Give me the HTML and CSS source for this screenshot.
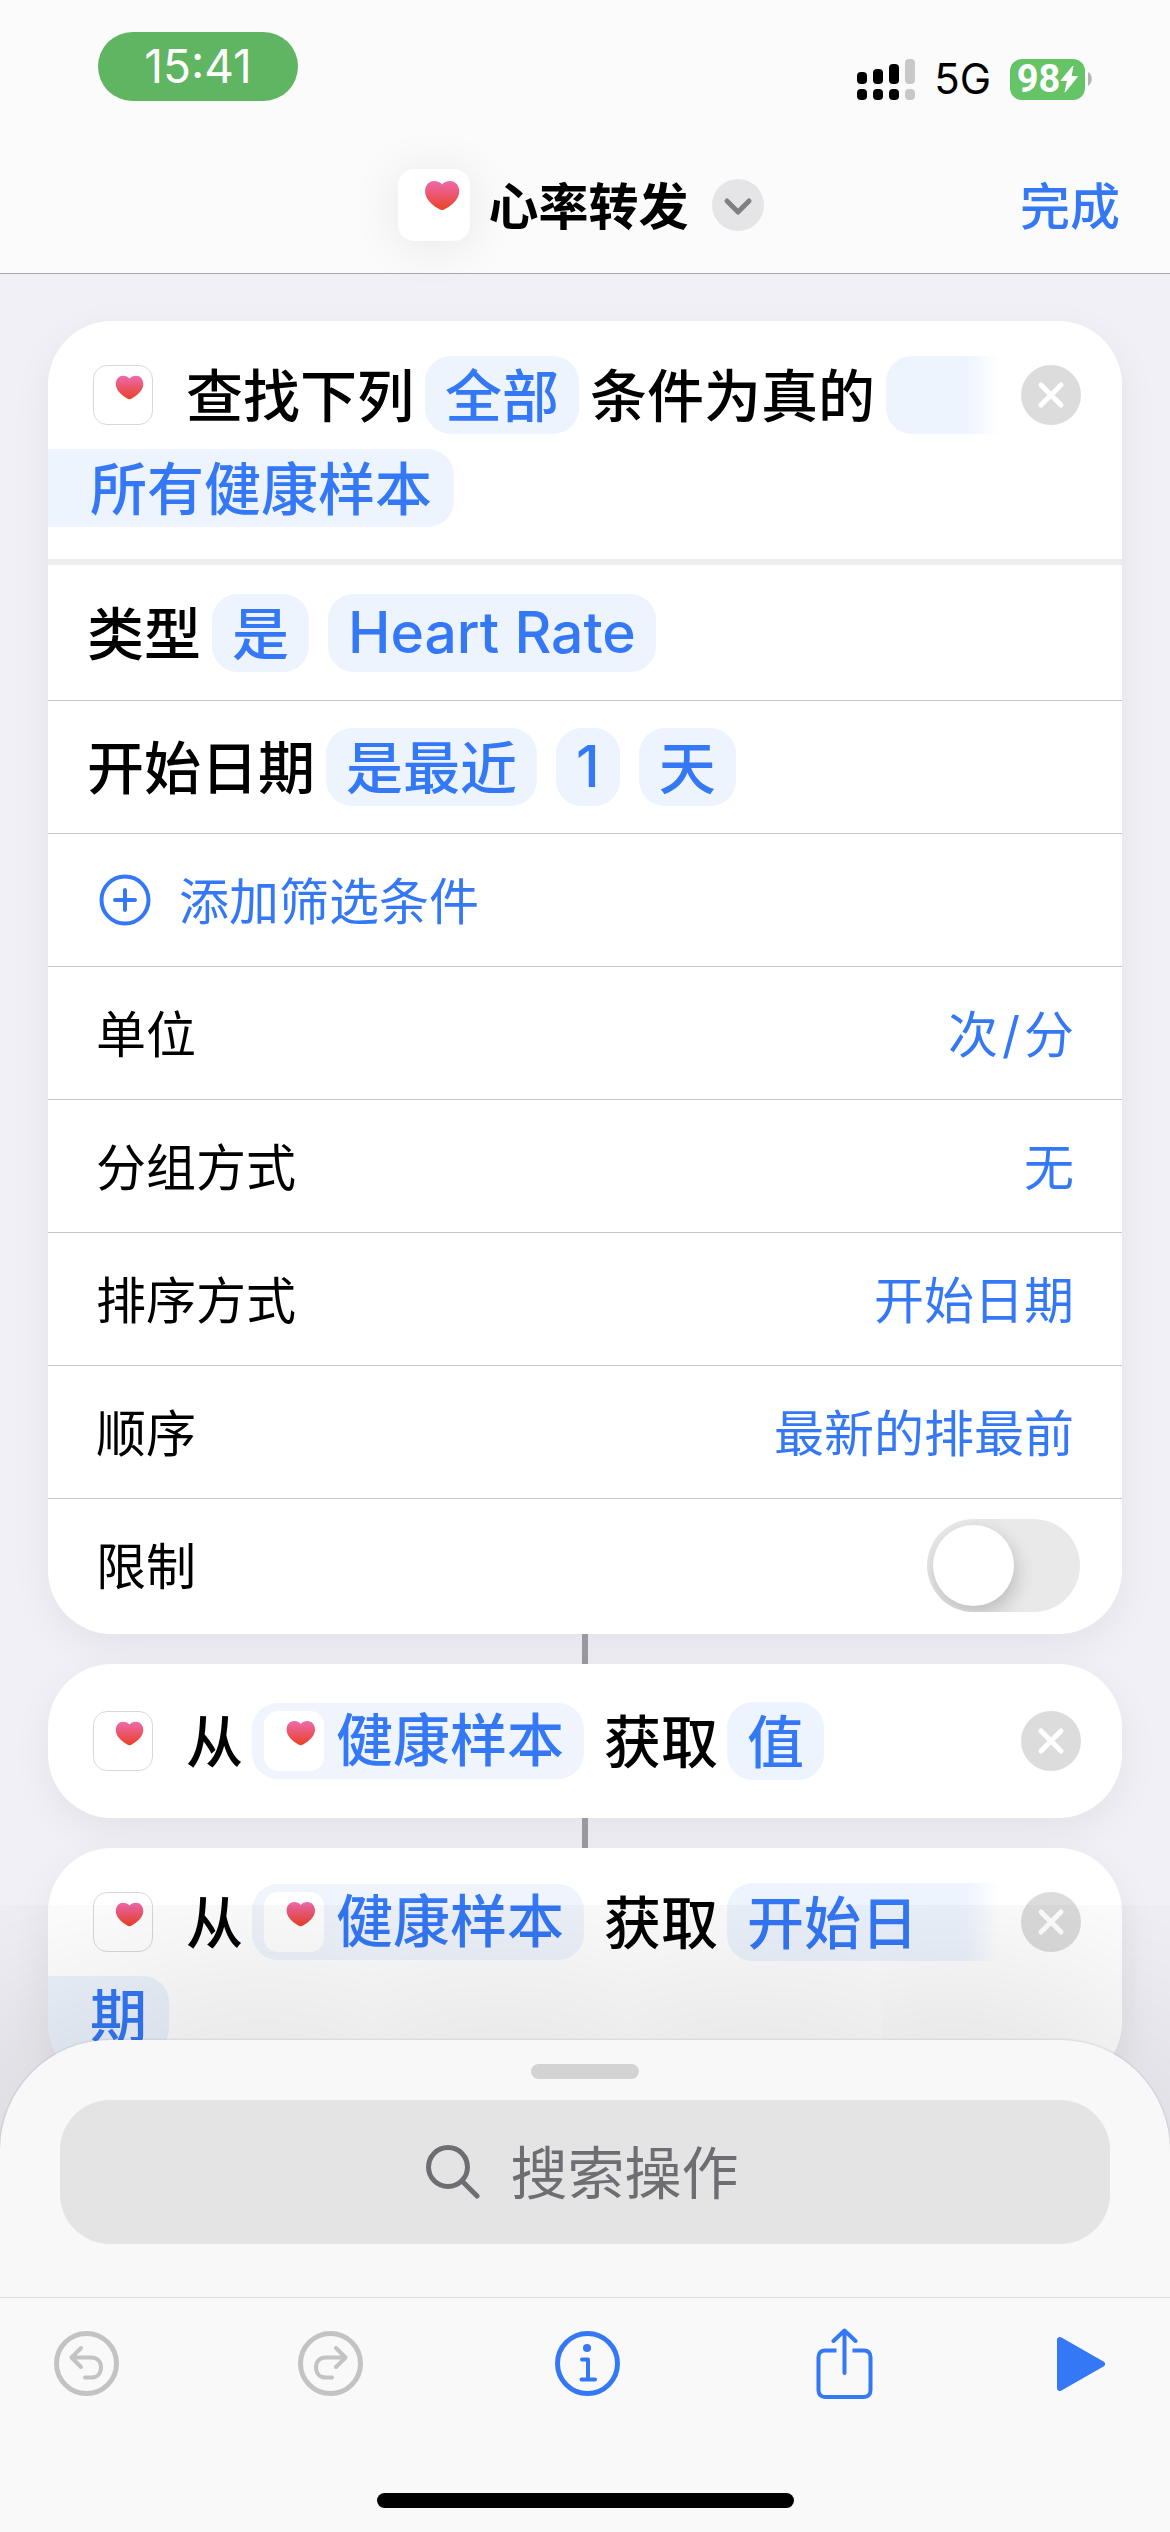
FILE: index.html
```html
<!DOCTYPE html>
<html lang="zh-CN">
<head>
<meta charset="utf-8">
<meta name="viewport" content="width=device-width, initial-scale=1">
<title>心率转发</title>
<link rel="stylesheet" href="styles.css">
</head>
<body>
<svg class="defs" aria-hidden="true">
  <defs>
    <linearGradient id="heart-fill" x1="0" y1="0" x2="0" y2="1">
      <stop offset="0" stop-color="#ec6aae"/>
      <stop offset="1" stop-color="#eb4025"/>
    </linearGradient>
    <symbol id="heart" viewBox="0 0 60 60">
      <path fill="url(#heart-fill)" d="M36.800 34.300C35.500 34.300 22.600 28 22.600 18.500C22.600 13.500 26 10 30 10C33 10 35.500 11 36.800 13C38 11 40.500 10 43.500 10C47.600 10 51 13.500 51 18.500C51 28 38 34.300 36.800 34.300Z"/>
    </symbol>
    <symbol id="cross" viewBox="0 0 60 60">
      <circle cx="30" cy="30" r="30" fill="currentColor"/>
      <path d="M20 20L40 40M40 20L20 40" stroke="#fff" stroke-width="5" stroke-linecap="round"/>
    </symbol>
  </defs>
</svg>

<header class="top">
  <div class="status">
    <span class="clock">15:41</span>
    <div class="signals">
      <svg class="bars" viewBox="0 0 58 41" aria-hidden="true">
        <rect x="0" y="13" width="10" height="12" rx="4"/><rect x="16" y="10" width="10" height="15" rx="4"/><rect x="32" y="5" width="10" height="20" rx="4"/>
        <rect x="0" y="30" width="10" height="11" rx="4"/><rect x="16" y="30" width="10" height="11" rx="4"/><rect x="32" y="30" width="10" height="11" rx="4"/>
        <g fill="#c8c8c8"><rect x="48" y="0" width="10" height="25" rx="4"/><rect x="48" y="30" width="10" height="11" rx="4"/></g>
      </svg>
      <span class="network">5G</span>
      <span class="battery">98<svg class="bolt" viewBox="0 0 18 28" aria-hidden="true"><path d="M13 1L1 15.500H7.500L5 27L17.500 11.500H11Z" fill="#fff" stroke="#fff" stroke-linejoin="round"/></svg></span>
      <svg class="nub" viewBox="0 0 4 14" aria-hidden="true"><path d="M0 0C5 3 5 11 0 14Z" fill="#b4b4b4"/></svg>
    </div>
  </div>
  <div class="nav">
    <button class="title" type="button">
      <svg class="title-icon" viewBox="0 0 60 60" aria-hidden="true"><use href="#heart" width="60" height="60"/></svg>
      <span class="title-text">心率转发</span>
      <svg class="chevron" viewBox="0 0 52 52" aria-hidden="true"><circle cx="26" cy="26" r="26" fill="#e5e5e7"/><path d="M15 22L26 33L37 22" fill="none" stroke="#808084" stroke-width="5" stroke-linecap="round" stroke-linejoin="round"/></svg>
    </button>
    <button class="done" type="button">完成</button>
  </div>
</header>

<main class="flow">
  <section class="card">
    <div class="action">
      <svg class="app-icon" viewBox="0 0 60 60" aria-hidden="true"><use href="#heart" width="60" height="60"/></svg>
      <div class="phrase spaced">
        <span class="word">查找下列</span><button class="chip" type="button">全部</button><span class="word">条件为真的</span><span class="chip open"></span>
      </div>
      <button class="remove" type="button" aria-label="移除"><svg viewBox="0 0 60 60"><use href="#cross"/></svg></button>
    </div>
    <div class="wrapped"><button class="chip tail" type="button">所有健康样本</button></div>
    <div class="filter first">
      <span class="filter-name">类型</span><button class="chip" type="button">是</button><button class="chip latin" type="button">Heart Rate</button>
    </div>
    <div class="filter">
      <span class="filter-name">开始日期</span><button class="chip" type="button">是最近</button><button class="chip latin" type="button">1</button><button class="chip" type="button">天</button>
    </div>
    <button class="row add" type="button">
      <svg class="plus" viewBox="0 0 52 52" aria-hidden="true"><g fill="none" stroke="currentColor" stroke-width="4" stroke-linecap="round"><circle cx="26" cy="26" r="23.500"/><path d="M26 16V36M16 26H36"/></g></svg>
      <span class="name">添加筛选条件</span>
    </button>
    <div class="row"><span class="name">单位</span><button class="value" type="button">次<span class="slash">/</span>分</button></div>
    <div class="row"><span class="name">分组方式</span><button class="value" type="button">无</button></div>
    <div class="row"><span class="name">排序方式</span><button class="value" type="button">开始日期</button></div>
    <div class="row"><span class="name">顺序</span><button class="value" type="button">最新的排最前</button></div>
    <div class="row"><label class="name" for="limit">限制</label><input class="switch" id="limit" type="checkbox" role="switch"></div>
  </section>

  <div class="link"></div>

  <section class="card">
    <div class="action single">
      <svg class="app-icon" viewBox="0 0 60 60" aria-hidden="true"><use href="#heart" width="60" height="60"/></svg>
      <div class="phrase">
        <span class="word">从</span><button class="chip variable" type="button"><svg class="chip-icon" viewBox="0 0 60 60" aria-hidden="true"><use href="#heart" width="60" height="60"/></svg>健康样本</button><span class="word verb">获取</span><button class="chip" type="button">值</button>
      </div>
      <button class="remove" type="button" aria-label="移除"><svg viewBox="0 0 60 60"><use href="#cross"/></svg></button>
    </div>
  </section>

  <div class="link"></div>

  <section class="card">
    <div class="action">
      <svg class="app-icon" viewBox="0 0 60 60" aria-hidden="true"><use href="#heart" width="60" height="60"/></svg>
      <div class="phrase">
        <span class="word">从</span><button class="chip variable" type="button"><svg class="chip-icon" viewBox="0 0 60 60" aria-hidden="true"><use href="#heart" width="60" height="60"/></svg>健康样本</button><span class="word verb">获取</span><button class="chip open" type="button">开始日</button>
      </div>
      <button class="remove" type="button" aria-label="移除"><svg viewBox="0 0 60 60"><use href="#cross"/></svg></button>
    </div>
    <div class="wrapped"><button class="chip tail" type="button">期</button></div>
  </section>
</main>

<footer class="sheet">
  <div class="drawer">
    <div class="grabber"></div>
    <button class="search" type="button">
      <svg class="lens" viewBox="0 0 54 54" aria-hidden="true"><g fill="none" stroke="currentColor" stroke-width="5" stroke-linecap="round"><circle cx="22" cy="22" r="19.500"/><path d="M36.500 36.500L51 51"/></g></svg>
      <span class="word">搜索操作</span>
    </button>
  </div>
  <nav class="toolbar">
    <button class="tool" type="button" aria-label="撤销" disabled>
      <svg class="round" viewBox="0 0 65 65"><g fill="none" stroke="currentColor" stroke-width="4" stroke-linecap="round" stroke-linejoin="round"><circle cx="32.500" cy="32.500" r="30" stroke-width="5"/><path d="M27 17L17.500 26.500L27 36M18.500 26.500H37C43 26.500 47 30.500 47 36.500S43 46.500 37 46.500H31"/></g></svg>
    </button>
    <button class="tool" type="button" aria-label="重做" disabled>
      <svg class="round" viewBox="0 0 65 65"><g fill="none" stroke="currentColor" stroke-width="4" stroke-linecap="round" stroke-linejoin="round"><circle cx="32.500" cy="32.500" r="30" stroke-width="5"/><path d="M38 17L47.500 26.500L38 36M46.500 26.500H28C22 26.500 18 30.500 18 36.500S22 46.500 28 46.500H34"/></g></svg>
    </button>
    <button class="tool" type="button" aria-label="信息">
      <svg class="round" viewBox="0 0 65 65"><g fill="none" stroke="currentColor" stroke-width="4" stroke-linecap="round" stroke-linejoin="round"><circle cx="32.500" cy="32.500" r="30" stroke-width="5"/><path d="M27 28.500H33V48.500M26.500 48.500H40"/></g><circle cx="32" cy="17" r="4" fill="currentColor"/></svg>
    </button>
    <button class="tool" type="button" aria-label="共享">
      <svg class="share" viewBox="0 0 57 72"><g fill="none" stroke="currentColor" stroke-width="4" stroke-linecap="round" stroke-linejoin="round"><path stroke-linecap="butt" d="M20.500 22.500H9C5 22.500 2.500 25 2.500 29V62C2.500 66.500 5 69 9 69H48C52 69 54.500 66.500 54.500 62V29C54.500 25 52 22.500 48 22.500H36.500"/><path d="M28.500 45V3M17.500 13L28.500 2.500L39.500 13"/></g></svg>
    </button>
    <button class="tool" type="button" aria-label="运行">
      <svg class="play" viewBox="0 0 48 54"><path d="M3 3L45 27L3 51Z" fill="currentColor" stroke="currentColor" stroke-width="6" stroke-linejoin="round"/></svg>
    </button>
  </nav>
  <div class="home"></div>
</footer>
</body>
</html>
```
FILE: styles.css
```css
:root {
  --blue: #3478f6;
  --chip: #edf4fe;
  --line: #c6c6c8;
}

* { box-sizing: border-box; }

body {
  margin: 0;
  min-height: 100vh;
  background: #f1f0f6;
  color: #000;
  font-family: Inter, "Noto Sans CJK SC", sans-serif;
  font-size: 50px;
  line-height: 60px;
}

button {
  margin: 0;
  padding: 0;
  border: 0;
  background: none;
  color: inherit;
  font: inherit;
  white-space: nowrap;
}

svg { display: block; flex: none; }

.defs { position: absolute; width: 0; height: 0; }

/* Header */
.top {
  height: 274px;
  background: #fbfbfc;
  border-bottom: 1px solid #a9a9ad;
}

.status {
  display: flex;
  justify-content: space-between;
  align-items: flex-start;
  padding: 32px 78px 0 98px;
}

.clock {
  width: 200px;
  border-radius: 35px;
  background: #5fb561;
  color: #fff;
  font-size: 46px;
  line-height: 69px;
  text-align: center;
}

.signals {
  display: flex;
  align-items: center;
  padding-top: 25px;
}

.bars { width: 58px; height: 41px; }

.network {
  margin: 0 19px;
  font-size: 42px;
  line-height: 44px;
}

.battery {
  display: flex;
  align-items: center;
  justify-content: center;
  width: 75px;
  height: 41px;
  border-radius: 12px;
  background: #65c466;
  color: #fff;
  font-family: Roboto, sans-serif;
  font-size: 38px;
  font-weight: 700;
  line-height: 41px;
}

.bolt { width: 18px; height: 28px; }

.nub { width: 4px; height: 14px; margin-left: 3px; }

.nav {
  display: grid;
  grid-template-columns: 1fr auto 1fr;
  align-items: center;
  padding: 68px 50px 0 41px;
}

.title {
  grid-column: 2;
  display: flex;
  align-items: center;
  gap: 19px;
}

.title-icon {
  width: 72px;
  height: 72px;
  border-radius: 16px;
  background: #fff;
  box-shadow: 0 4px 50px rgba(0, 0, 0, .09);
}

.title-text { padding-top: 3px; font-weight: 600; }

.chevron { width: 52px; height: 52px; margin-left: 4px; }

.done {
  justify-self: end;
  padding-top: 3px;
  color: var(--blue);
  font-weight: 500;
}

/* Action cards */
.flow {
  display: flex;
  flex-direction: column;
  padding: 47px 48px 0;
}

.card {
  overflow: hidden;
  border-radius: 64px;
  background: #fff;
  box-shadow: 0 12px 40px rgba(0, 0, 0, .06);
}

.link {
  align-self: center;
  width: 6px;
  height: 30px;
  background: #9a999f;
}

.action {
  display: flex;
  align-items: center;
  padding: 35px 41px 0 45px;
}

.single { padding: 38px 41px 38px 45px; }

.app-icon {
  width: 60px;
  height: 60px;
  border: 1px solid #d8d8d8;
  border-radius: 14px;
  background: #fff;
}

.phrase {
  display: flex;
  flex: 1;
  align-items: center;
  gap: 9px;
  margin: 0 21px 0 33px;
  font-size: 57px;
  font-weight: 500;
  white-space: nowrap;
}

.word { padding-top: 4px; }

.spaced { gap: 11px; }

.chip {
  flex: none;
  height: 78px;
  padding: 0 20px;
  border-radius: 26px;
  background: var(--chip);
  color: var(--blue);
  font-size: 57px;
  font-weight: 500;
  line-height: 82px;
}

.latin { line-height: 78px; }

/* A chip whose text continues on the next line fades out at the edge. */
.open {
  flex: 1;
  border-radius: 26px 0 0 26px;
  background: linear-gradient(to left, transparent, var(--chip) 36px);
  text-align: left;
}

.variable {
  display: flex;
  align-items: center;
  gap: 12px;
  height: 76px;
  padding-left: 12px;
  background: #eff4fd;
  line-height: 80px;
}

.chip-icon {
  width: 60px;
  height: 60px;
  border-radius: 14px;
  background: #fff;
}

.verb { margin-left: 11px; }

.remove { color: #dcdcdc; }

.remove svg { width: 60px; height: 60px; }

.wrapped { padding: 15px 0 32px; }

.tail {
  padding: 0 22px 0 42px;
  border-radius: 0 26px 26px 0;
}

.filter {
  display: flex;
  align-items: center;
  gap: 19px;
  height: 133px;
  padding-left: 39px;
  border-bottom: 1px solid var(--line);
}

.first {
  height: 142px;
  border-top: 6px solid #ededed;
}

.filter-name {
  margin-right: -8px;
  padding-top: 4px;
  font-size: 57px;
  font-weight: 500;
}

.row {
  display: flex;
  align-items: center;
  justify-content: space-between;
  width: 100%;
  height: 133px;
  padding: 0 48px;
  border-bottom: 1px solid var(--line);
}

.row:last-child {
  height: 135px;
  padding: 0 42px 3px 48px;
  border-bottom: 0;
}

.add {
  justify-content: flex-start;
  gap: 28px;
  padding-left: 51px;
  color: var(--blue);
}

.plus { width: 52px; height: 52px; }

.name { padding-top: 3px; }

.value { padding-top: 3px; color: var(--blue); }

.slash { margin: 0 4px; }

.switch {
  appearance: none;
  display: flex;
  width: 153px;
  height: 93px;
  margin: 0;
  padding: 6px;
  border-radius: 47px;
  background: #e9e9ea;
  overflow: hidden;
}

.switch::before {
  content: "";
  width: 81px;
  height: 81px;
  border-radius: 50%;
  background: #fff;
  box-shadow: 2px 8px 20px rgba(0, 0, 0, .2);
}

.switch:checked { justify-content: flex-end; background: #65c466; }

/* Bottom sheet */
.sheet {
  position: fixed;
  right: 0;
  bottom: 0;
  left: 0;
  border-radius: 110px 110px 0 0;
  background: #f8f8f8;
  box-shadow: 0 0 3px rgba(0, 0, 0, .2), 0 0 260px rgba(0, 0, 0, .24);
}

.drawer { padding: 24px 60px 53px; }

.grabber {
  width: 108px;
  height: 15px;
  margin: 0 auto 21px;
  border-radius: 8px;
  background: #d3d3d3;
}

.search {
  display: flex;
  align-items: center;
  justify-content: center;
  gap: 31px;
  width: 100%;
  height: 144px;
  padding-right: 6px;
  border-radius: 50px;
  background: #e4e4e4;
  color: #6e6e72;
  font-size: 57px;
}

.lens { width: 54px; height: 54px; }

.toolbar {
  display: grid;
  grid-template-columns: 244fr 257fr 261fr 241fr 48px;
  align-items: center;
  justify-items: start;
  height: 132px;
  padding: 0 65px 0 54px;
  border-top: 1px solid #dcdcdc;
  background: #f9f9f9;
}

.tool { color: var(--blue); }

.tool:disabled { color: #c3c3c3; }

.round { width: 65px; height: 65px; }

.share { width: 57px; height: 72px; }

.play { width: 48px; height: 54px; }

.home {
  padding: 64px 0 24px;
  background: #f9f9f9;
}

.home::before {
  content: "";
  display: block;
  width: 417px;
  height: 15px;
  margin: 0 auto;
  border-radius: 8px;
  background: #000;
}
```
